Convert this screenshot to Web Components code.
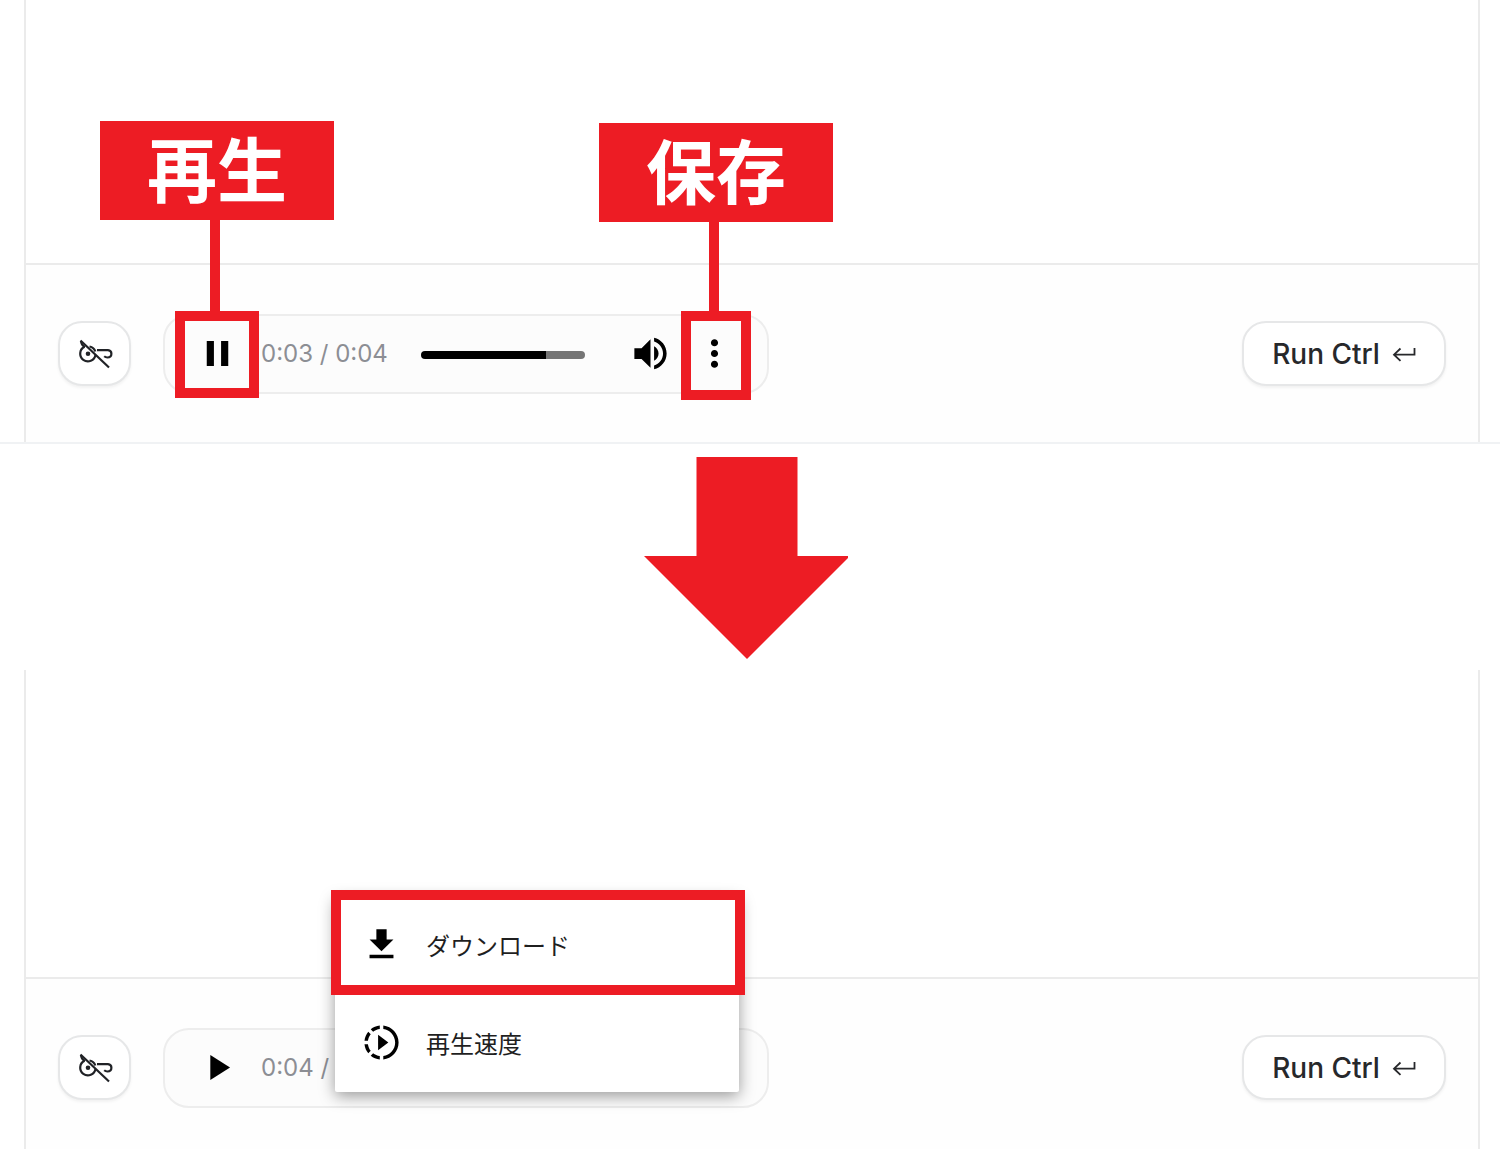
<!DOCTYPE html>
<html lang="ja">
<head>
<meta charset="utf-8">
<meta name="viewport" content="width=device-width, initial-scale=1">
<title>再生と保存</title>
<style>
  body {
    margin: 0;
    min-height: 100vh;
    display: flex;
    flex-direction: column;
    background: #fff;
    overflow: hidden;
    font-family: Inter, "Noto Sans CJK JP", sans-serif;
    --red: #ed1c24;
    --line: #ebebeb;
    --ink: #27282b;
  }
</style>
</head>
<body>
<step-screen closed>
  <key-button slot="start"></key-button>
  <audio-player slot="start" state="playing" time="0:03 / 0:04" progress="76">
    <callout-mark slot="play-mark" variant="play">再生</callout-mark>
    <callout-mark slot="more-mark" variant="save">保存</callout-mark>
  </audio-player>
  <run-button slot="end"></run-button>
</step-screen>
<step-arrow></step-arrow>
<step-screen fill>
  <key-button slot="start"></key-button>
  <audio-player slot="start" state="paused" time="0:04 / 0:04" progress="100">
    <player-menu slot="menu">
      <menu-item icon="download" marked>ダウンロード</menu-item>
      <menu-item icon="speed">再生速度</menu-item>
    </player-menu>
  </audio-player>
  <run-button slot="end"></run-button>
</step-screen>

<script>
const ICONS = {
  pause: 'M6 19h4V5H6v14zm8-14v14h4V5h-4z',
  play: 'M8 5v14l11-7z',
  volume: 'M3 9v6h4l5 5V4L7 9H3zm13.5 3c0-1.77-1.02-3.29-2.5-4.03v8.05c1.48-.73 2.5-2.25 2.5-4.02zM14 3.23v2.06c2.89.86 5 3.54 5 6.71s-2.11 5.85-5 6.71v2.06c4.01-.91 7-4.49 7-8.77s-2.99-7.86-7-8.77z',
  more: 'M12 8c1.1 0 2-.9 2-2s-.9-2-2-2-2 .9-2 2 .9 2 2 2zm0 2c-1.1 0-2 .9-2 2s.9 2 2 2 2-.9 2-2-.9-2-2-2zm0 6c-1.1 0-2 .9-2 2s.9 2 2 2 2-.9 2-2-.9-2-2-2z',
  download: 'M19 9h-4V3H9v6H5l7 7 7-7zM5 18v2h14v-2H5z',
  speed: 'M10 7.5v9l6-4.5zM11 4.07V2.05c-2.01.2-3.84 1-5.32 2.21L7.1 5.69c1.11-.86 2.44-1.44 3.9-1.62zM5.69 7.1L4.26 5.68C3.05 7.16 2.25 8.99 2.05 11h2.02c.18-1.46.76-2.79 1.62-3.9zM4.07 13H2.05c.2 2.01 1 3.84 2.21 5.32l1.43-1.43c-.86-1.1-1.44-2.43-1.62-3.89zm1.61 6.74C7.16 20.95 9 21.75 11 21.95v-2.02c-1.46-.18-2.79-.76-3.9-1.62l-1.42 1.43zM22 12c0 5.16-3.92 9.42-8.95 9.95v-2.02C16.97 19.41 20 16.05 20 12s-3.03-7.41-6.95-7.93V2.05C18.08 2.58 22 6.84 22 12z'
};
const icon = (name, size) =>
  `<svg width="${size}" height="${size}" viewBox="0 0 24 24" fill="#000" aria-hidden="true"><path d="${ICONS[name]}"/></svg>`;

const BASE = `
  *, :host { box-sizing: border-box; }
  svg { display: block; flex: none; }
  button { margin: 0; padding: 0; border: 0; background: none; font: inherit; color: inherit; cursor: pointer; }
`;
const PILL = `
  button {
    display: flex; align-items: center; justify-content: center;
    height: 65px; border: 2px solid #e6e7e8; border-radius: 24px; background: #fff;
    box-shadow: 0 2px 3px rgba(0, 0, 0, .05); color: var(--ink);
  }
`;

class Base extends HTMLElement {
  connectedCallback() {
    if (this.shadowRoot) return;
    this.attachShadow({ mode: 'open' }).innerHTML = `<style>${BASE}${this.css()}</style>${this.html()}`;
  }
}

/* One screen: an empty canvas above a toolbar, between two side rules. */
customElements.define('step-screen', class extends Base {
  css() { return `
    :host { display: flex; flex-direction: column; padding: 0 20px 0 24px; }
    :host([closed]) { border-bottom: 2px solid #f0f2f4; }
    :host([fill]) { flex: 1; }
    .panel { flex: 1; display: flex; flex-direction: column; border: solid var(--line); border-width: 0 2px; }
    .canvas { height: 263px; }
    :host([fill]) .canvas { height: 307px; }
    .toolbar {
      display: flex; align-items: center; justify-content: space-between; gap: 32px;
      height: 179px; padding: 0 32px; border-top: 2px solid var(--line); background: #fefefe;
    }
    .group { display: flex; align-items: center; gap: 32px; }
  `; }
  html() { return `
    <section class="panel">
      <div class="canvas"></div>
      <div class="toolbar">
        <div class="group"><slot name="start"></slot></div>
        <div class="group"><slot name="end"></slot></div>
      </div>
    </section>`; }
});

customElements.define('key-button', class extends Base {
  css() { return PILL + `:host { display: block; } button { width: 73px; }`; }
  html() { return `
    <button aria-label="API key">
      <svg width="38" height="34" viewBox="0 0 38 34" fill="none" stroke="#202226" stroke-width="2.200">
        <path d="M8.500 9.800A7.700 7.700 0 1 0 19.500 18"/>
        <path d="M13.500 9.500c3 .6 5 2.500 5.800 5"/>
        <path d="M5 4c.2 2.800 1.500 4.800 4 6"/>
        <path d="M21 13.200h11c2.200.2 3.400 1.600 3.400 3.600 0 2.200-1.500 3.700-4 3.700-1.300 0-2.300-.4-3.200-1.200"/>
        <path d="M4.500 3.500 33 30.500"/>
        <circle cx="12" cy="16.800" r="2.300" fill="#202226" stroke="none"/>
      </svg>
    </button>`; }
});

customElements.define('run-button', class extends Base {
  css() { return PILL + `
    :host { display: block; }
    button { width: 204px; gap: 12px; font-size: 28px; font-weight: 500; line-height: 32px; white-space: nowrap; }
  `; }
  html() { return `
    <button>
      <span>Run Ctrl</span>
      <svg width="24" height="16" viewBox="0 0 24 16" fill="none" stroke="currentColor" stroke-width="1.800">
        <path d="M22.500 2v6.700H2M8.500 2.500 2 8.700l6.500 6.200"/>
      </svg>
    </button>`; }
});

customElements.define('audio-player', class extends Base {
  css() { return `
    :host {
      position: relative; display: flex; align-items: center;
      width: 606px; height: 80px; padding: 0 31px;
      border: 2px solid #ededed; border-radius: 26px; background: #fcfcfc;
    }
    .time { margin-left: 22px; width: 128px; font-size: 24px; line-height: 30px; color: #8c8e94; white-space: nowrap; }
    input {
      appearance: none; flex: 1; min-width: 0; height: 8px; margin: 3px 44px 0 32px; border-radius: 4px;
      background: linear-gradient(90deg, #000 var(--played), #757575 var(--played));
    }
    input::-webkit-slider-thumb { appearance: none; width: 0; height: 8px; }
    .more { margin-left: 21px; }
  `; }
  html() {
    const playing = this.getAttribute('state') === 'playing';
    const progress = this.getAttribute('progress');
    return `
      <button aria-label="${playing ? 'Pause' : 'Play'}">${icon(playing ? 'pause' : 'play', 43)}</button>
      <span class="time">${this.getAttribute('time')}</span>
      <input type="range" min="0" max="100" value="${progress}" style="--played: ${progress}%" aria-label="Seek">
      <button aria-label="Mute">${icon('volume', 43)}</button>
      <button class="more" aria-label="More">${icon('more', 43)}</button>
      <slot name="play-mark"></slot><slot name="more-mark"></slot><slot name="menu"></slot>`;
  }
});

/* A red label with a stem that leads down to a frame round a control. */
customElements.define('callout-mark', class extends Base {
  css() { return `
    :host {
      position: absolute; top: -195px; width: 234px;
      display: flex; flex-direction: column; align-items: center; pointer-events: none;
    }
    :host([variant=play]) { left: -65px; }
    :host([variant=save]) { right: -66px; top: -193px; }
    .label {
      display: flex; justify-content: center; width: 100%; height: 99px; background: var(--red); color: #fff;
      font: 700 70px/91px "Noto Sans CJK JP", sans-serif;
    }
    .stem { width: 10px; height: 91px; margin-right: 4px; background: var(--red); }
    .frame { width: 84px; height: 87px; border: 10px solid var(--red); }
    :host([variant=save]) .stem { height: 89px; }
    :host([variant=save]) .frame { width: 70px; height: 89px; }
  `; }
  html() { return `<div class="label"><slot></slot></div><div class="stem"></div><div class="frame"></div>`; }
});

customElements.define('step-arrow', class extends Base {
  css() { return `:host { display: flex; justify-content: center; padding: 13px 8px 11px 0; }`; }
  html() { return `
    <svg width="204" height="202" viewBox="0 0 204 202" fill="#ed1c24" aria-hidden="true">
      <path d="M52.500 0h101v99H204v2L103 202 0 99h52.500z"/>
    </svg>`; }
});

customElements.define('player-menu', class extends Base {
  css() { return `
    :host {
      position: absolute; left: 170px; bottom: 14px; width: 404px;
      display: flex; flex-direction: column; border-radius: 2px; background: #fff;
      box-shadow: 0 4px 16px rgba(0, 0, 0, .4);
    }
  `; }
  html() { return `<slot></slot>`; }
});

customElements.define('menu-item', class extends Base {
  css() { return `
    :host { position: relative; display: block; }
    button {
      display: flex; align-items: center; gap: 24px; width: 100%; height: 98px; padding: 0 26px;
      font: 24px/36px "Noto Sans CJK JP", sans-serif; color: #1f1f1f; text-align: left;
    }
    :host([marked])::after {
      content: ""; position: absolute; inset: -6px -6px -1px -4px; border: 10px solid var(--red); pointer-events: none;
    }
  `; }
  html() { return `<button>${icon(this.getAttribute('icon'), 41)}<span><slot></slot></span></button>`; }
});
</script>
</body>
</html>
